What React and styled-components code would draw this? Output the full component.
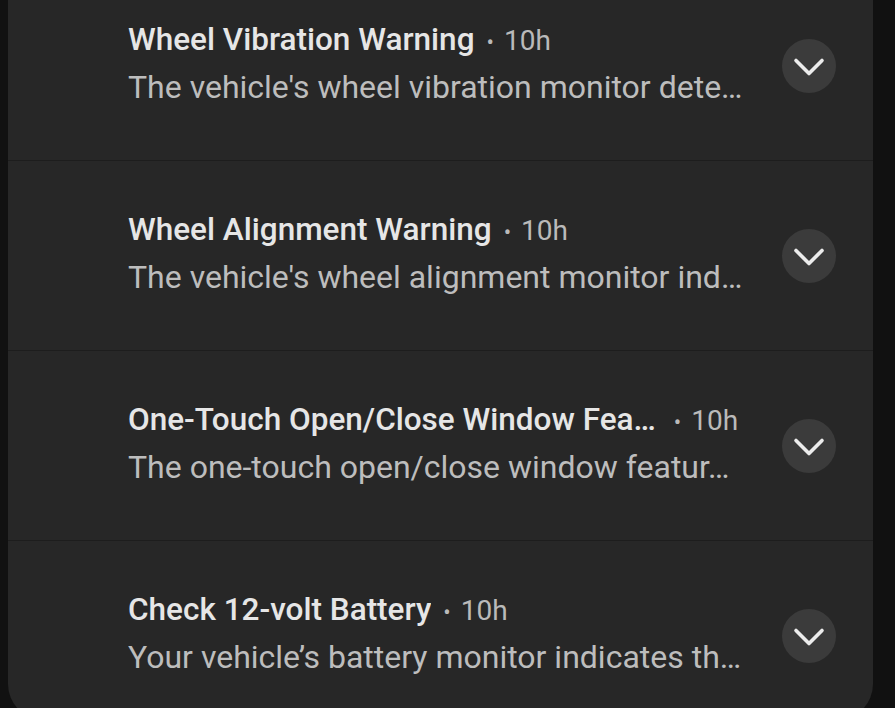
import React from "react";
import styled, { createGlobalStyle } from "styled-components";

const Global = createGlobalStyle`
  html, body { margin: 0; padding: 0; background: #111111; overflow: hidden; }
  body { font-family: Roboto, "Noto Sans", "Liberation Sans", sans-serif; }
`;

const Screen = styled.div`
  width: 895px;
  height: 708px;
  overflow: hidden;
  background: #111111;
`;

const Panel = styled.div`
  margin: -29px 22px 0 8px;
  height: 749px;
  background: #272727;
  border-radius: 0 0 36px 36px;
  display: flex;
  flex-direction: column;
`;

const Row = styled.div`
  display: flex;
  align-items: flex-start;
  height: ${(p) => (p.$last ? "188px" : "189px")};
  flex-shrink: 0;
  padding: 0 37px 0 120px;
  border-bottom: ${(p) => (p.$last ? "none" : "1px solid #1d1d1d")};
`;

const Texts = styled.div`
  flex: 1;
  min-width: 0;
  padding-top: 49px;
`;

const TitleLine = styled.div`
  display: flex;
  align-items: baseline;
  height: 40px;
  line-height: 40px;
  white-space: nowrap;
`;

const Title = styled.span`
  font-size: 31.5px;
  font-weight: 500;
  color: #e6e6e6;
  overflow: hidden;
  text-overflow: ellipsis;
`;

const Time = styled.span`
  font-size: 28px;
  color: #bababa;
  margin-left: ${(p) => p.$gap}px;
  &::before {
    content: "•";
    margin-right: 10px;
    font-size: 22px;
  }
`;

const Body = styled.div`
  margin-top: 7px;
  font-size: 32px;
  line-height: 40px;
  color: #bdbdbd;
  white-space: nowrap;
  overflow: hidden;
  text-overflow: ellipsis;
`;

const Expand = styled.button`
  margin-top: 68px;
  margin-left: 30px;
  width: 54px;
  height: 54px;
  border-radius: 50%;
  border: none;
  padding: 0;
  background: #3b3b3b;
  display: flex;
  align-items: center;
  justify-content: center;
  flex-shrink: 0;
`;

const Chevron = () => (
  <svg width="34" height="22" viewBox="0 0 34 22">
    <path d="M4 5.5 L17 18.5 L30 5.5" fill="none" stroke="#ececec" strokeWidth="3.6" strokeLinecap="round" strokeLinejoin="round" />
  </svg>
);

const items = [
  { title: "Wheel Vibration Warning", gap: 12, body: "The vehicle's wheel vibration monitor dete…" },
  { title: "Wheel Alignment Warning", gap: 12, body: "The vehicle's wheel alignment monitor ind…" },
  { title: "One-Touch Open/Close Window Fea…", gap: 18, body: "The one-touch open/close window featur…" },
  { title: "Check 12-volt Battery", gap: 12, body: "Your vehicle’s battery monitor indicates th…" },
];

export default function App() {
  return (
    <Screen>
      <Global />
      <Panel>
        {items.map((it, i) => (
          <Row key={i} $last={i === items.length - 1}>
            <Texts>
              <TitleLine>
                <Title>{it.title}</Title>
                <Time $gap={it.gap}>10h</Time>
              </TitleLine>
              <Body>{it.body}</Body>
            </Texts>
            <Expand aria-label="Expand">
              <Chevron />
            </Expand>
          </Row>
        ))}
      </Panel>
    </Screen>
  );
}
